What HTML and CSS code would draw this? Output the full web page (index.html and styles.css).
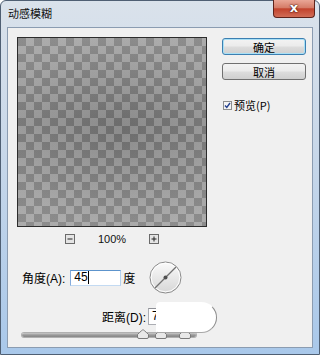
FILE: index.html
```html
<!DOCTYPE html>
<html lang="zh-CN">
<head>
    <meta charset="UTF-8">
    <title>动感模糊</title>
    <link rel="stylesheet" href="styles.css">
</head>
<body>

    <div class="window">
        <div class="titlebar">
            <span class="title">动感模糊</span>
            <span class="close">x</span>
        </div>

        <div class="client">
            <div class="top">
                <div class="left">
                    <div class="preview"></div>
                    <div class="zoom">
                        <svg class="zbtn" width="10" height="10" viewBox="0 0 10 10">
                            <rect x="0.5" y="0.5" width="9" height="9" fill="#e4e4e4" stroke="#6a6a6a"/>
                            <line x1="2.5" y1="5" x2="7.5" y2="5" stroke="#222"/>
                        </svg>
                        <span class="zval">100%</span>
                        <svg class="zbtn" width="10" height="10" viewBox="0 0 10 10">
                            <rect x="0.5" y="0.5" width="9" height="9" fill="#e4e4e4" stroke="#6a6a6a"/>
                            <line x1="2.5" y1="5" x2="7.5" y2="5" stroke="#222"/>
                            <line x1="5" y1="2.5" x2="5" y2="7.5" stroke="#222"/>
                        </svg>
                    </div>
                </div>

                <div class="right">
                    <button class="btn default">确定</button>
                    <button class="btn">取消</button>
                    <label class="check">
                        <svg width="9" height="9" viewBox="0 0 9 9">
                            <rect x="0.5" y="0.5" width="8" height="8" fill="#f4f4f4" stroke="#8e8f8f"/>
                            <path d="M2 4.5 L3.8 6.5 L7 2" fill="none" stroke="#24408f" stroke-width="1.4"/>
                        </svg>
                        <span>预览(P)</span>
                    </label>
                </div>
            </div>

            <div class="angle">
                <span class="label">角度(A):</span>
                <div class="field focus">45<span class="caret"></span></div>
                <span class="unit">度</span>
                <svg class="dial" width="33" height="33" viewBox="0 0 33 33">
                    <defs>
                        <linearGradient id="dg" x1="0" y1="0" x2="0" y2="1">
                            <stop offset="0" stop-color="#fbfbfb"/>
                            <stop offset="1" stop-color="#d6d6d6"/>
                        </linearGradient>
                    </defs>
                    <circle cx="16.5" cy="16.5" r="15.5" fill="url(#dg)" stroke="#8a8a8a"/>
                    <circle cx="16.5" cy="16.5" r="14.3" fill="none" stroke="#ffffff"/>
                    <line x1="6" y1="27" x2="27" y2="6" stroke="#707070" stroke-width="1.2"/>
                    <circle cx="16.5" cy="16.5" r="2" fill="#505050"/>
                </svg>
            </div>

            <div class="dist">
                <span class="label">距离(D):</span>
                <div class="field">7</div>
            </div>

            <div class="slider">
                <svg class="thumb t1" width="12" height="10" viewBox="0 0 12 10"><path d="M6 0.7 Q6.6 0.7 11.5 5.5 V8 Q11.5 9.5 10 9.5 H2 Q0.5 9.5 0.5 8 V5.5 Q5.4 0.7 6 0.7 Z" fill="#e8e8e8" stroke="#7a7a7a"/></svg>
                <svg class="thumb t2" width="12" height="10" viewBox="0 0 12 10"><path d="M6 0.7 Q6.6 0.7 11.5 5.5 V8 Q11.5 9.5 10 9.5 H2 Q0.5 9.5 0.5 8 V5.5 Q5.4 0.7 6 0.7 Z" fill="#e8e8e8" stroke="#7a7a7a"/></svg>
                <svg class="thumb t3" width="12" height="10" viewBox="0 0 12 10"><path d="M6 0.7 Q6.6 0.7 11.5 5.5 V8 Q11.5 9.5 10 9.5 H2 Q0.5 9.5 0.5 8 V5.5 Q5.4 0.7 6 0.7 Z" fill="#e8e8e8" stroke="#7a7a7a"/></svg>
            </div>

            <div class="blob"></div>
        </div>
    </div>

</body>
</html>
```

FILE: styles.css
```css
body {
    margin: 0;
    background: #fff;
    font-family: "Liberation Sans", "Noto Sans CJK SC", sans-serif;
}
.window {
    width: 320px;
    height: 355px;
    box-sizing: border-box;
    border: 1px solid #4f5f73;
    border-radius: 6px 6px 0 0;
    padding: 0 6px 6px;
    background: linear-gradient(#dae2eb, #c9d8e9 40%, #a9c8ea);
    display: flex;
    flex-direction: column;
}
.titlebar {
    height: 26px;
    display: flex;
    justify-content: space-between;
    align-items: flex-start;
}
.title {
    margin: 5px 0 0 1px;
    font-family: "Noto Sans CJK SC", sans-serif;
    font-size: 11px;
    line-height: 15px;
    color: #111;
}
.close {
    width: 42px;
    height: 18px;
    margin: -1px -2px 0 0;
    box-sizing: border-box;
    border: 1px solid #5e231b;
    border-top: none;
    border-radius: 0 0 4px 4px;
    background: linear-gradient(#e9a696, #d57c68 45%, #c2432d 52%, #d16d57);
    color: #fff;
    font-family: "DejaVu Sans", sans-serif;
    font-weight: bold;
    font-size: 13px;
    line-height: 15px;
    text-align: center;
    text-shadow: 0 0 2px #3a0d08, 0 0 1px #3a0d08;
}
.client {
    flex: 1;
    position: relative;
    background: #f0f0f0;
    border: 1px solid #8b9cb1;
    color: #000;
    font-size: 12px;
}
.top {
    display: flex;
    align-items: flex-start;
}
.left {
    margin: 9px 0 0 9px;
    display: flex;
    flex-direction: column;
    align-items: center;
}
.preview {
    width: 190px;
    height: 190px;
    box-sizing: border-box;
    border: 1px solid #2c2c2c;
    background-image:
        linear-gradient(rgba(255, 255, 255, 0.08), rgba(0, 0, 0, 0.06) 45%, rgba(255, 255, 255, 0.08)),
        radial-gradient(ellipse at 55% 50%, rgba(0, 0, 0, 0.08), rgba(255, 255, 255, 0.05) 75%),
        conic-gradient(#a0a0a0 25%, #7c7c7c 0 50%, #a0a0a0 0 75%, #7c7c7c 0);
    background-size: 100% 100%, 100% 100%, 16px 16px;
}
.zoom {
    margin-top: 7px;
    height: 10px;
    display: flex;
    align-items: center;
    gap: 23px;
}
.zbtn { display: block; }
.zval {
    font-size: 11px;
    line-height: 10px;
    color: #111;
}
.right {
    margin: 10px 0 0 15px;
    width: 84px;
    display: flex;
    flex-direction: column;
}
.btn {
    height: 17px;
    margin: 0 0 8px;
    padding: 0;
    box-sizing: border-box;
    border: 1px solid #707070;
    border-radius: 3px;
    background: linear-gradient(#f3f3f3, #ebebeb 48%, #dddddd 52%, #cfcfcf);
    font-family: "Noto Sans CJK SC", sans-serif;
    font-size: 11px;
    line-height: 14px;
    color: #000;
}
.btn.default {
    border-color: #3c7fb1;
    box-shadow: inset 0 0 0 1px #a8e0f6;
}
.check {
    margin: 10px 0 0 1px;
    display: flex;
    align-items: center;
    gap: 2px;
    font-family: "Noto Sans CJK SC", sans-serif;
    font-size: 11px;
    line-height: 14px;
}
.check svg { display: block; }
.label {
    font-family: "Liberation Sans", "Noto Sans CJK SC", sans-serif;
    font-size: 12px;
}
.angle {
    margin: 17px 0 0 14px;
    height: 33px;
    display: flex;
    align-items: center;
}
.field {
    height: 17px;
    box-sizing: border-box;
    background: #fff;
    border: 1px solid #abadb3;
    border-top-color: #8e9096;
    padding-left: 3px;
    font-size: 12px;
    line-height: 15px;
    display: flex;
    align-items: center;
}
.field.focus {
    width: 51px;
    height: 16px;
    margin-left: 5px;
    border-color: #5d94cc #b4d1ef #c3daf2 #84abdc;
}
.caret {
    width: 1px;
    height: 13px;
    background: #000;
}
.unit {
    margin-left: 2px;
    font-family: "Noto Sans CJK SC", sans-serif;
}
.dial {
    display: block;
    margin-left: 14px;
}
.dist {
    margin: 14px 0 0 94px;
    height: 17px;
    display: flex;
    align-items: center;
}
.dist .field {
    width: 52px;
    margin-left: 2px;
}
.slider {
    position: relative;
    margin: 8px 0 0 14px;
    width: 174px;
    height: 4px;
    border-radius: 2px;
    background: linear-gradient(#cacaca, #9a9a9a 50%, #878787);
    box-shadow: 0 0 0 1px #b0b0b0;
}
.thumb {
    position: absolute;
    top: -4px;
}
.t1 { left: 115px; }
.t2 { left: 133px; }
.t3 { left: 157px; }
.blob {
    position: absolute;
    left: 148px;
    top: 274px;
    width: 61px;
    height: 31px;
    box-sizing: border-box;
    background: #fff;
    border: 1px solid transparent;
    border-right-color: #8c8c8c;
    border-bottom-color: #a8a8a8;
    border-radius: 4px 16px 16px 2px;
}
```
